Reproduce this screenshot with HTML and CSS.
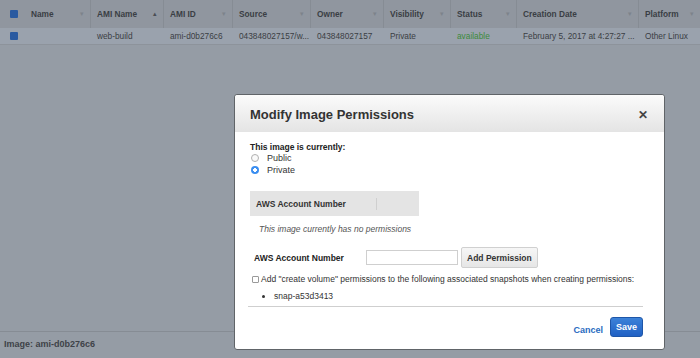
FILE: index.html
```html
<!DOCTYPE html>
<html lang="en">
<head>
    <meta charset="UTF-8">
    <title>AMIs - Modify Image Permissions</title>
    <link rel="stylesheet" href="styles.css">
</head>
<body>
    <div class="page">
        <div class="grid">
            <div class="row head">
                <div class="cell c-check"><span class="box"></span></div>
                <div class="cell c-name">Name <span class="caret">▾</span></div>
                <div class="cell c-ami">AMI Name <span class="caret up">▴</span></div>
                <div class="cell c-id">AMI ID <span class="caret">▾</span></div>
                <div class="cell c-src">Source <span class="caret">▾</span></div>
                <div class="cell c-own">Owner <span class="caret">▾</span></div>
                <div class="cell c-vis">Visibility <span class="caret">▾</span></div>
                <div class="cell c-stat">Status <span class="caret">▾</span></div>
                <div class="cell c-date">Creation Date <span class="caret">▾</span></div>
                <div class="cell c-plat">Platform <span class="caret">▾</span></div>
            </div>
            <div class="row selected">
                <div class="cell c-check"><span class="box"></span></div>
                <div class="cell c-name"></div>
                <div class="cell c-ami">web-build</div>
                <div class="cell c-id">ami-d0b276c6</div>
                <div class="cell c-src">043848027157/w...</div>
                <div class="cell c-own">043848027157</div>
                <div class="cell c-vis">Private</div>
                <div class="cell c-stat ok">available</div>
                <div class="cell c-date">February 5, 2017 at 4:27:27 ...</div>
                <div class="cell c-plat">Other Linux</div>
            </div>
        </div>
        <div class="details">Image: ami-d0b276c6</div>
    </div>

    <div class="modal">
        <div class="modal-head">
            <h2>Modify Image Permissions</h2>
            <span class="close">✕</span>
        </div>
        <div class="modal-body">
            <div class="label">This image is currently:</div>
            <label class="radio"><span class="dot"></span>Public</label>
            <label class="radio"><span class="dot on"></span>Private</label>

            <div class="perm-table">
                <div class="perm-head">
                    <span class="perm-col">AWS Account Number</span>
                    <span class="perm-rest"></span>
                </div>
            </div>
            <div class="empty">This image currently has no permissions</div>

            <div class="add-row">
                <span class="label">AWS Account Number</span>
                <span class="input"></span>
                <span class="btn">Add Permission</span>
            </div>

            <div class="snap">
                <span class="check"></span>Add "create volume" permissions to the following associated snapshots when creating permissions:
            </div>
            <ul class="snaps">
                <li>snap-a53d3413</li>
            </ul>
        </div>
        <div class="modal-foot">
            <span class="cancel">Cancel</span>
            <span class="save">Save</span>
        </div>
    </div>
</body>
</html>
```

FILE: styles.css
```css
* {
    box-sizing: border-box;
}
body {
    margin: 0;
    width: 700px;
    height: 358px;
    background: #959ca5;
    font-family: "Liberation Sans", Arial, sans-serif;
    font-size: 9px;
    color: #33373d;
    overflow: hidden;
    position: relative;
}
.page {
    height: 358px;
    display: flex;
    flex-direction: column;
}
.grid {
    flex: 1;
    font-size: 8.3px;
}
.row {
    display: flex;
    align-items: center;
}
.row.head {
    height: 28px;
    background: #90969f;
    font-weight: bold;
    color: #3a3e44;
}
.row.selected {
    height: 17px;
    background: #9aa2ad;
    border-bottom: 1px solid #8d939b;
    color: #3a3e44;
}
.cell {
    padding-left: 6px;
    white-space: nowrap;
    overflow: hidden;
    display: flex;
    align-items: center;
    height: 100%;
}
.row.head .cell {
    border-right: 1px solid #868c94;
    justify-content: space-between;
    padding-right: 6px;
}
.row.head .cell:last-child {
    border-right: none;
}
.caret {
    font-size: 7px;
    color: #7d838b;
    font-weight: normal;
}
.caret.up {
    color: #4a4e54;
}
.c-check { width: 25px; justify-content: center; padding-left: 3px; }
.row.head .c-check { border-right: none; justify-content: center; padding-right: 0; }
.c-name { width: 66px; }
.c-ami { width: 73px; }
.c-id { width: 69px; }
.c-src { width: 78px; }
.c-own { width: 73px; }
.c-vis { width: 67px; }
.c-stat { width: 66px; }
.c-date { width: 122px; }
.c-plat { flex: 1; }
.ok {
    color: #3c8a3c;
}
.box {
    width: 8px;
    height: 8px;
    border-radius: 1px;
    background: #2a5aa0;
    display: inline-block;
}
.details {
    height: 27px;
    border-top: 1px solid #868c94;
    padding: 7px 4px 0;
    font-weight: bold;
    color: #3e4248;
}

/* modal */
.modal {
    position: absolute;
    left: 234px;
    top: 94px;
    width: 431px;
    height: 256px;
    background: #fff;
    border: 1px solid #606468;
    border-radius: 3px;
    color: #333;
    display: flex;
    flex-direction: column;
}
.modal-head {
    height: 37px;
    background: linear-gradient(#fbfbfb, #e4e4e4);
    border-radius: 3px 3px 0 0;
    display: flex;
    align-items: center;
    justify-content: space-between;
    padding: 2px 16px 0 15px;
}
.modal-head h2 {
    margin: 0;
    font-size: 13px;
    color: #333;
}
.close {
    font-size: 12px;
    font-weight: bold;
    color: #444;
}
.modal-body {
    flex: 1;
    padding: 10px 15px 0;
}
.label {
    font-weight: bold;
    font-size: 8.5px;
    color: #222;
}
.radio {
    display: flex;
    align-items: center;
    height: 12px;
    padding-left: 1px;
    font-size: 9px;
    color: #333;
}
.dot {
    width: 8px;
    height: 8px;
    border-radius: 50%;
    border: 1px solid #b0b0b0;
    margin-right: 8px;
    background: #fafafa;
}
.dot.on {
    border: none;
    background: radial-gradient(circle, #fff 0 1.6px, #3b8ef0 2px);
}
.perm-table {
    margin-top: 15px;
    width: 169px;
}
.perm-head {
    height: 25px;
    background: #e4e4e4;
    display: flex;
    align-items: center;
    font-weight: bold;
    font-size: 8.5px;
    color: #333;
}
.perm-col {
    width: 127px;
    padding-left: 6px;
    border-right: 1px solid #cfcfcf;
    line-height: 12px;
}
.empty {
    padding: 8px 0 0 9px;
    font-style: italic;
    color: #555;
    font-size: 8.5px;
}
.add-row {
    display: flex;
    align-items: center;
    margin-top: 13px;
}
.add-row .label {
    width: 116px;
    padding-left: 4px;
}
.input {
    width: 92px;
    height: 15px;
    border: 1px solid #cfcfcf;
    background: #fff;
}
.btn {
    margin-left: 3px;
    padding: 0 5px;
    height: 21px;
    line-height: 20px;
    border: 1px solid #d0d0d0;
    border-radius: 2px;
    background: linear-gradient(#f6f6f6, #e6e6e6);
    font-weight: bold;
    font-size: 8.5px;
    color: #333;
}
.snap {
    display: flex;
    align-items: center;
    margin-top: 6px;
    color: #333;
    font-size: 8.5px;
}
.check {
    width: 7px;
    height: 7px;
    border: 1px solid #9a9a9a;
    border-radius: 1px;
    margin-right: 2px;
    margin-left: 2px;
}
.snaps {
    margin: 7px 0 0;
    padding-left: 24px;
    font-size: 8.5px;
    color: #333;
}
.modal-foot {
    margin: 0 21px 0 13px;
    border-top: 1px solid #cfcfcf;
    height: 43px;
    display: flex;
    align-items: center;
    justify-content: flex-end;
    padding-top: 1px;
}
.cancel {
    color: #2a6bbf;
    font-weight: bold;
    margin-right: 7px;
    margin-top: 2px;
}
.save {
    background: linear-gradient(#3c82d8, #2061c4);
    color: #fff;
    font-weight: bold;
    border-radius: 3px;
    border: 1px solid #1e56a8;
    padding: 0 5px;
    height: 20px;
    line-height: 18px;
    margin-bottom: 4px;
}
```
